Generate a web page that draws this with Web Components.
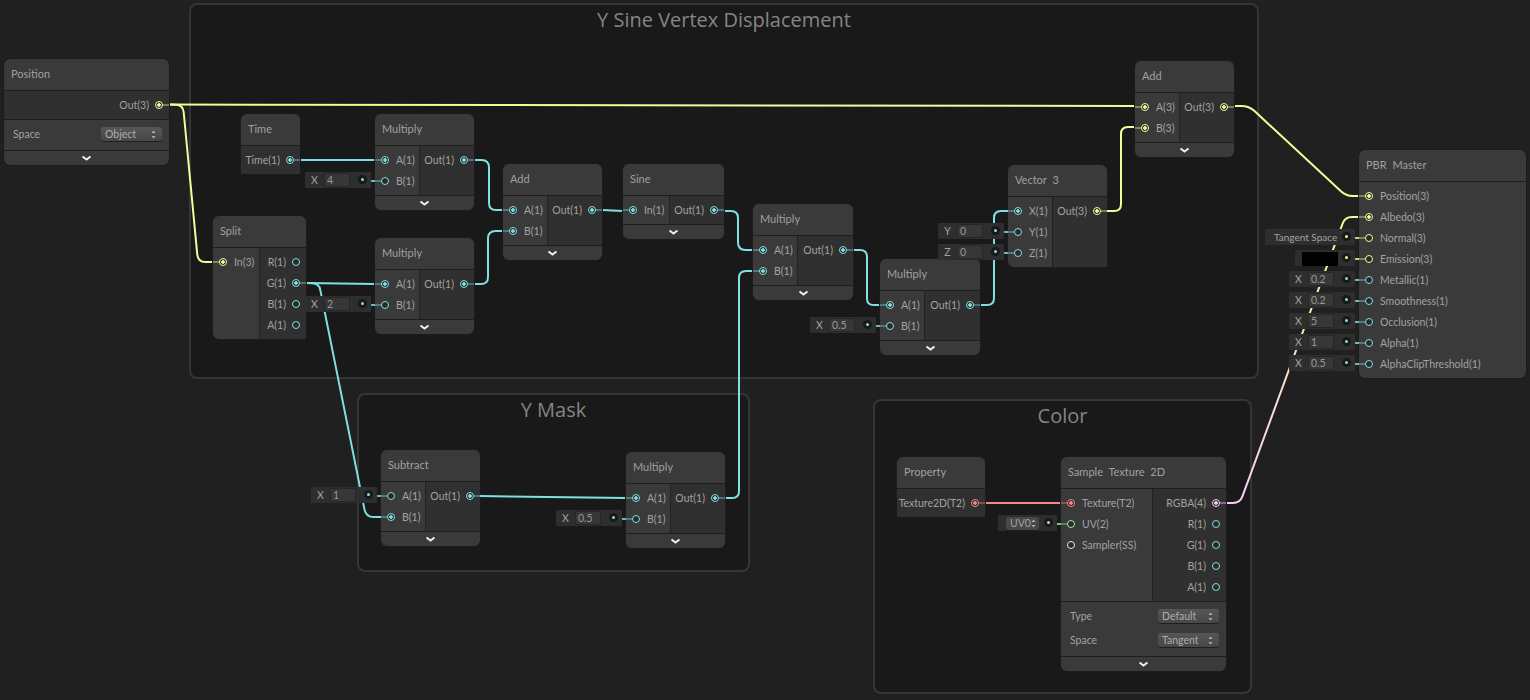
<!DOCTYPE html>
<html>
<head>
<meta charset="utf-8">
<title>Shader Graph</title>
<style>
  html, body { margin: 0; height: 100%; background: #202020; }
  body { font: 10.5px Lato, "Open Sans", sans-serif; color: #a2a2a2; overflow: hidden; }
</style>
</head>
<body>
<sg-canvas>
  <sg-group x="189" y="3" w="1070" h="376" title="Y Sine Vertex Displacement"></sg-group>
  <sg-group x="357" y="393" w="393" h="179" title="Y Mask"></sg-group>
  <sg-group x="873" y="399" w="379" h="295" title="Color"></sg-group>

  <!-- these two sit under the wires, the rest on top -->
  <sg-node x="381" y="450" w="99" split="44" title="Subtract" more>
    <sg-port slot="in" label="A(1)" c="cy"><sg-default slot="control" label="X" value="1"></sg-default></sg-port>
    <sg-port slot="in" label="B(1)" c="cy" on></sg-port>
    <sg-port slot="out" label="Out(1)" c="cy" on></sg-port>
  </sg-node>
  <sg-node x="1008" y="165" w="99" split="44" title="Vector 3">
    <sg-port slot="in" label="X(1)" c="cy" on></sg-port>
    <sg-port slot="in" label="Y(1)" c="cy"><sg-default slot="control" label="Y" value="0"></sg-default></sg-port>
    <sg-port slot="in" label="Z(1)" c="cy"><sg-default slot="control" label="Z" value="0"></sg-default></sg-port>
    <sg-port slot="out" label="Out(3)" c="ye" on></sg-port>
  </sg-node>

  <sg-wires></sg-wires>

  <sg-node x="4" y="59" w="165" title="Position" more>
    <sg-port slot="out" label="Out(3)" c="ye" on></sg-port>
    <sg-option slot="opts" label="Space" value="Object"></sg-option>
  </sg-node>
  <sg-node x="241" y="114" w="59" title="Time">
    <sg-port slot="out" label="Time(1)" c="cy" on></sg-port>
  </sg-node>
  <sg-node x="375" y="114" w="99" split="44" title="Multiply" more>
    <sg-port slot="in" label="A(1)" c="cy" on></sg-port>
    <sg-port slot="in" label="B(1)" c="cy"><sg-default slot="control" label="X" value="4"></sg-default></sg-port>
    <sg-port slot="out" label="Out(1)" c="cy" on></sg-port>
  </sg-node>
  <sg-node x="213" y="216" w="93" split="46" title="Split">
    <sg-port slot="in" label="In(3)" c="ye" on></sg-port>
    <sg-port slot="out" label="R(1)" c="cy"></sg-port>
    <sg-port slot="out" label="G(1)" c="cy" on></sg-port>
    <sg-port slot="out" label="B(1)" c="cy"></sg-port>
    <sg-port slot="out" label="A(1)" c="cy"></sg-port>
  </sg-node>
  <sg-node x="375" y="238" w="99" split="44" title="Multiply" more>
    <sg-port slot="in" label="A(1)" c="cy" on></sg-port>
    <sg-port slot="in" label="B(1)" c="cy"><sg-default slot="control" label="X" value="2"></sg-default></sg-port>
    <sg-port slot="out" label="Out(1)" c="cy" on></sg-port>
  </sg-node>
  <sg-node x="503" y="164" w="99" split="44" title="Add" more>
    <sg-port slot="in" label="A(1)" c="cy" on></sg-port>
    <sg-port slot="in" label="B(1)" c="cy" on></sg-port>
    <sg-port slot="out" label="Out(1)" c="cy" on></sg-port>
  </sg-node>
  <sg-node x="623" y="164" w="101" split="46" title="Sine" more>
    <sg-port slot="in" label="In(1)" c="cy" on></sg-port>
    <sg-port slot="out" label="Out(1)" c="cy" on></sg-port>
  </sg-node>
  <sg-node x="753" y="204" w="100" split="44" title="Multiply" more>
    <sg-port slot="in" label="A(1)" c="cy" on></sg-port>
    <sg-port slot="in" label="B(1)" c="cy" on></sg-port>
    <sg-port slot="out" label="Out(1)" c="cy" on></sg-port>
  </sg-node>
  <sg-node x="880" y="259" w="100" split="44" title="Multiply" more>
    <sg-port slot="in" label="A(1)" c="cy" on></sg-port>
    <sg-port slot="in" label="B(1)" c="cy"><sg-default slot="control" label="X" value="0.5"></sg-default></sg-port>
    <sg-port slot="out" label="Out(1)" c="cy" on></sg-port>
  </sg-node>
  <sg-node x="1135" y="61" w="99" split="44" title="Add" more>
    <sg-port slot="in" label="A(3)" c="ye" on></sg-port>
    <sg-port slot="in" label="B(3)" c="ye" on></sg-port>
    <sg-port slot="out" label="Out(3)" c="ye" on></sg-port>
  </sg-node>
  <sg-node x="626" y="452" w="99" split="44" title="Multiply" more>
    <sg-port slot="in" label="A(1)" c="cy" on></sg-port>
    <sg-port slot="in" label="B(1)" c="cy"><sg-default slot="control" label="X" value="0.5"></sg-default></sg-port>
    <sg-port slot="out" label="Out(1)" c="cy" on></sg-port>
  </sg-node>
  <sg-node x="897" y="457" w="88" title="Property">
    <sg-port slot="out" label="Texture2D(T2)" c="re" on></sg-port>
  </sg-node>
  <sg-node x="1061" y="457" w="165" split="91" title="Sample Texture 2D" more>
    <sg-port slot="in" label="Texture(T2)" c="re" on></sg-port>
    <sg-port slot="in" label="UV(2)" c="gr"><sg-default slot="control" kind="uv" value="UV0"></sg-default></sg-port>
    <sg-port slot="in" label="Sampler(SS)" c="wh"></sg-port>
    <sg-port slot="out" label="RGBA(4)" c="pi" on></sg-port>
    <sg-port slot="out" label="R(1)" c="cy"></sg-port>
    <sg-port slot="out" label="G(1)" c="cy"></sg-port>
    <sg-port slot="out" label="B(1)" c="cy"></sg-port>
    <sg-port slot="out" label="A(1)" c="cy"></sg-port>
    <sg-option slot="opts" label="Type" value="Default"></sg-option>
    <sg-option slot="opts" label="Space" value="Tangent"></sg-option>
  </sg-node>
  <sg-node x="1359" y="150" w="167" title="PBR Master">
    <sg-port slot="in" label="Position(3)" c="ye" on></sg-port>
    <sg-port slot="in" label="Albedo(3)" c="ye" on></sg-port>
    <sg-port slot="in" label="Normal(3)" c="ye"><sg-default slot="control" kind="text" value="Tangent Space"></sg-default></sg-port>
    <sg-port slot="in" label="Emission(3)" c="ye"><sg-default slot="control" kind="color"></sg-default></sg-port>
    <sg-port slot="in" label="Metallic(1)" c="cy"><sg-default slot="control" label="X" value="0.2"></sg-default></sg-port>
    <sg-port slot="in" label="Smoothness(1)" c="cy"><sg-default slot="control" label="X" value="0.2"></sg-default></sg-port>
    <sg-port slot="in" label="Occlusion(1)" c="cy"><sg-default slot="control" label="X" value="5"></sg-default></sg-port>
    <sg-port slot="in" label="Alpha(1)" c="cy"><sg-default slot="control" label="X" value="1"></sg-default></sg-port>
    <sg-port slot="in" label="AlphaClipThreshold(1)" c="cy"><sg-default slot="control" label="X" value="0.5"></sg-default></sg-port>
  </sg-node>
</sg-canvas>

<script>
const COLORS = { ye: "#f4fb9a", cy: "#7fe0e4", re: "#f58888", pi: "#fbcbf4", gr: "#9aef92", wh: "#e8e8e8" };

const ARROWS = `<svg width="5" height="9" viewBox="0 0 5 9"><path d="M2.5 0.5L4.5 3H0.5zM2.5 8.5L0.5 6H4.5z" fill="#b0b0b0"/></svg>`;

class SgCanvas extends HTMLElement {
  constructor() {
    super();
    this.attachShadow({ mode: "open" }).innerHTML = `
      <style>
        :host { display: block; position: relative; width: 1530px; height: 700px; background: #202020; overflow: hidden; }
      </style>
      <slot></slot>`;
  }
}

class SgGroup extends HTMLElement {
  constructor() {
    super();
    const g = (n) => this.getAttribute(n);
    this.attachShadow({ mode: "open" }).innerHTML = `
      <style>
        :host {
          display: block; position: absolute; box-sizing: border-box;
          left: ${g("x")}px; top: ${g("y")}px; width: ${g("w")}px; height: ${g("h")}px;
          background: #191919; border: 2px solid #353535; border-radius: 8px;
        }
        .title { text-align: center; font: 20px "Open Sans", sans-serif; line-height: 30px; color: #858585; }
      </style>
      <div class="title">${g("title")}</div>`;
  }
}

class SgNode extends HTMLElement {
  constructor() {
    super();
    const g = (n) => this.getAttribute(n);
    const hasIn = this.querySelector('[slot="in"]');
    const hasOut = this.querySelector('[slot="out"]');
    const hasOpts = this.querySelector('[slot="opts"]');
    this.attachShadow({ mode: "open" }).innerHTML = `
      <style>
        :host {
          display: flex; flex-direction: column; position: absolute; box-sizing: border-box;
          left: ${g("x")}px; top: ${g("y")}px; width: ${g("w")}px;
          background: #3a3a3a; border-radius: 6px; box-shadow: 0 0 0 1px #1c1c1c;
        }
        .head {
          height: 31px; line-height: 30px; padding-left: 7px; border-bottom: 1px solid #1e1e1e;
          color: #a0a0a0; font-size: 11px; word-spacing: 3px; white-space: nowrap;
        }
        .body { display: flex; }
        .in, .out { padding: 3px 0 4px; min-width: 0; }
        .in { flex: ${hasOut ? `0 0 ${g("split")}px` : "1"}; box-sizing: border-box; ${hasIn ? "" : "display:none;"} }
        .out { flex: 1; background: #303030; ${hasIn && hasOut ? "border-left: 1px solid #232323;" : ""} ${hasOut ? "" : "display:none;"} }
        .body:last-child .out, .body:last-child .in { border-radius: 0 0 6px 6px; }
        .opts { padding: 3px 0; border-top: 1px solid #1e1e1e; ${hasOpts ? "" : "display:none;"} }
        .more {
          height: 14px; border-top: 1px solid #1e1e1e; display: flex; align-items: center; justify-content: center;
          ${this.hasAttribute("more") ? "" : "display:none;"}
        }
      </style>
      <div class="head">${g("title")}</div>
      <div class="body">
        <div class="in"><slot name="in"></slot></div>
        <div class="out"><slot name="out"></slot></div>
      </div>
      <div class="opts"><slot name="opts"></slot></div>
      <div class="more"><svg width="11" height="7" viewBox="0 0 11 7"><path d="M1.5 1.5L5.5 4.5L9.5 1.5" fill="none" stroke="#f0f0f0" stroke-width="2"/></svg></div>`;
  }
}

class SgPort extends HTMLElement {
  constructor() {
    super();
    const color = COLORS[this.getAttribute("c")];
    const on = this.hasAttribute("on");
    const isOut = this.getAttribute("slot") === "out";
    const hasCtl = this.querySelector('[slot="control"]');
    this.attachShadow({ mode: "open" }).innerHTML = `
      <style>
        :host { display: block; }
        .row {
          position: relative; height: 21px; display: flex; align-items: center; padding: 0 6px;
          gap: ${isOut ? 6 : 7}px; flex-direction: ${isOut ? "row-reverse" : "row"}; white-space: nowrap;
        }
        .dot {
          position: relative; z-index: 1; flex: none; box-sizing: border-box; width: 8px; height: 8px; border-radius: 50%;
          border: 1.5px solid ${color};
          background: ${on ? `radial-gradient(circle, ${color} 0 1.5px, #2a2a2a 2px)` : "#2a2a2a"};
        }
        .stub {
          position: absolute; top: 10px; height: 2px; ${isOut ? "right: 0;" : "left: 0;"} width: 8px;
          background: ${color}; opacity: .38; ${on || hasCtl ? "" : "display: none;"}
        }
        .link { position: absolute; top: 10px; height: 2px; left: -9px; width: 9px; background: ${color}; opacity: .8; ${hasCtl ? "" : "display: none;"} }
      </style>
      <div class="row">
        <slot name="control"></slot>
        <span class="link"></span>
        <span class="stub"></span>
        <span class="dot"></span>
        <span class="label">${this.getAttribute("label")}</span>
      </div>`;
  }
}

class SgDefault extends HTMLElement {
  constructor() {
    super();
    const kind = this.getAttribute("kind") || "num";
    const value = this.getAttribute("value") || "";
    const port = this.closest("sg-port");
    const color = COLORS[port.getAttribute("c")];
    let inner = "";
    let width = 66;
    if (kind === "num") {
      inner = `<span class="lab">${this.getAttribute("label")}</span><span class="field">${value}</span>`;
    } else if (kind === "text") {
      width = 90;
      inner = `<span class="txt">${value}</span>`;
    } else if (kind === "color") {
      width = 60;
      inner = `<span class="swatch"></span>`;
    } else if (kind === "uv") {
      width = 59;
      inner = `<span class="drop"><span>${value}</span>${ARROWS}</span>`;
    }
    this.attachShadow({ mode: "open" }).innerHTML = `
      <style>
        :host {
          display: flex; align-items: center; position: absolute; box-sizing: border-box;
          right: calc(100% + 4px); top: 2px; height: 16px; width: ${width}px;
          background: #2e2e2e; border-radius: 1px; z-index: 2;
        }
        .lab { flex: 0 0 19px; text-align: center; }
        .field {
          flex: 0 0 26px; box-sizing: border-box; height: 14px; line-height: 12px; padding-left: 2px;
          background: #373737; border: 1px solid #262626; border-radius: 1px; color: #979797;
        }
        .txt { padding-left: 9px; white-space: nowrap; font-size: 10px; }
        .swatch { margin-left: 7px; width: 36px; height: 14px; margin-top: 2px; background: #000; }
        .drop {
          margin-left: 8px; width: 33px; height: 13px; box-sizing: border-box; padding: 0 3px 0 4px; display: flex; align-items: center; justify-content: space-between;
          background: #484848; border-radius: 3px; box-shadow: 0 1px 0 #1e1e1e; line-height: 13px;
        }
        .pin {
          position: absolute; right: 4px; top: 3px; width: 9px; height: 9px; border-radius: 50%; background: #191919;
          display: flex; align-items: center; justify-content: center;
        }
        .pin i { display: block; width: 3px; height: 3px; border-radius: 50%; background: ${color}; }
      </style>
      ${inner}
      <span class="pin"><i></i></span>`;
  }
}

class SgOption extends HTMLElement {
  constructor() {
    super();
    this.attachShadow({ mode: "open" }).innerHTML = `
      <style>
        :host { display: flex; align-items: center; justify-content: space-between; height: 24px; padding: 0 7px 0 9px; }
        span.t { position: relative; top: -1px; }
        .drop {
          box-sizing: border-box; width: 61px; height: 14px; padding: 0 6px 0 4px; display: flex; align-items: center; justify-content: space-between;
          background: linear-gradient(#565656, #474747); border-radius: 3px; box-shadow: 0 1px 0 #1e1e1e; color: #adadad; margin-top: -2px;
        }
      </style>
      <span class="t">${this.getAttribute("label")}</span>
      <span class="drop"><span>${this.getAttribute("value")}</span>${ARROWS}</span>`;
  }
}

// wires run from node edge to node edge, corners get rounded in path()
const WIRES = [
  ["ye", [[169, 104.5], [1135, 106]]],
  ["ye", [[169, 104.5], [183, 105], [198, 262], [213, 262]]],
  ["ye", [[1234, 106], [1249, 106], [1346, 196], [1359, 196]]],
  ["ye", [[1107, 211], [1121, 211], [1121, 127], [1135, 127]]],
  ["cy", [[300, 160], [375, 160]]],
  ["cy", [[474, 160], [489, 160], [489, 210], [503, 210]]],
  ["cy", [[474, 284], [488, 284], [488, 231], [503, 231]]],
  ["cy", [[306, 283], [375, 284]]],
  ["cy", [[306, 283], [319, 283.5], [366, 517], [381, 517]]],
  ["cy", [[602, 210], [623, 211]]],
  ["cy", [[724, 211], [738, 211], [738, 250], [753, 250]]],
  ["cy", [[725, 498], [739, 498], [739, 271], [753, 271]]],
  ["cy", [[853, 250], [867, 250], [867, 305], [880, 305]]],
  ["cy", [[980, 305], [994, 305], [994, 211], [1008, 211]]],
  ["cy", [[480, 496], [626, 498]]],
  ["re", [[985, 503], [1061, 503]]],
  ["grad", [[1226, 503], [1240, 503], [1345, 217], [1359, 217]]],
];

function path(pts, r) {
  let d = `M${pts[0][0]} ${pts[0][1]}`;
  for (let i = 1; i < pts.length - 1; i++) {
    const [px, py] = pts[i - 1], [x, y] = pts[i], [nx, ny] = pts[i + 1];
    const a = Math.hypot(x - px, y - py), b = Math.hypot(nx - x, ny - y);
    const k = Math.min(r, a / 2, b / 2);
    d += `L${x + (px - x) * k / a} ${y + (py - y) * k / a}Q${x} ${y} ${x + (nx - x) * k / b} ${y + (ny - y) * k / b}`;
  }
  const last = pts[pts.length - 1];
  return d + `L${last[0]} ${last[1]}`;
}

class SgWires extends HTMLElement {
  constructor() {
    super();
    const lines = WIRES.map(([c, pts]) =>
      `<path d="${path(pts, 8)}" fill="none" stroke-width="2" stroke="${c === "grad" ? "url(#albedo)" : COLORS[c]}"/>`).join("");
    this.attachShadow({ mode: "open" }).innerHTML = `
      <style>
        :host { display: block; position: absolute; inset: 0; pointer-events: none; }
        svg { display: block; }
      </style>
      <svg width="1530" height="700">
        <defs>
          <linearGradient id="albedo" gradientUnits="userSpaceOnUse" x1="1240" y1="503" x2="1345" y2="217">
            <stop offset="0" stop-color="${COLORS.pi}"/><stop offset="1" stop-color="${COLORS.ye}"/>
          </linearGradient>
        </defs>
        ${lines}
      </svg>`;
  }
}

customElements.define("sg-canvas", SgCanvas);
customElements.define("sg-group", SgGroup);
customElements.define("sg-default", SgDefault);
customElements.define("sg-port", SgPort);
customElements.define("sg-option", SgOption);
customElements.define("sg-node", SgNode);
customElements.define("sg-wires", SgWires);
</script>
</body>
</html>
